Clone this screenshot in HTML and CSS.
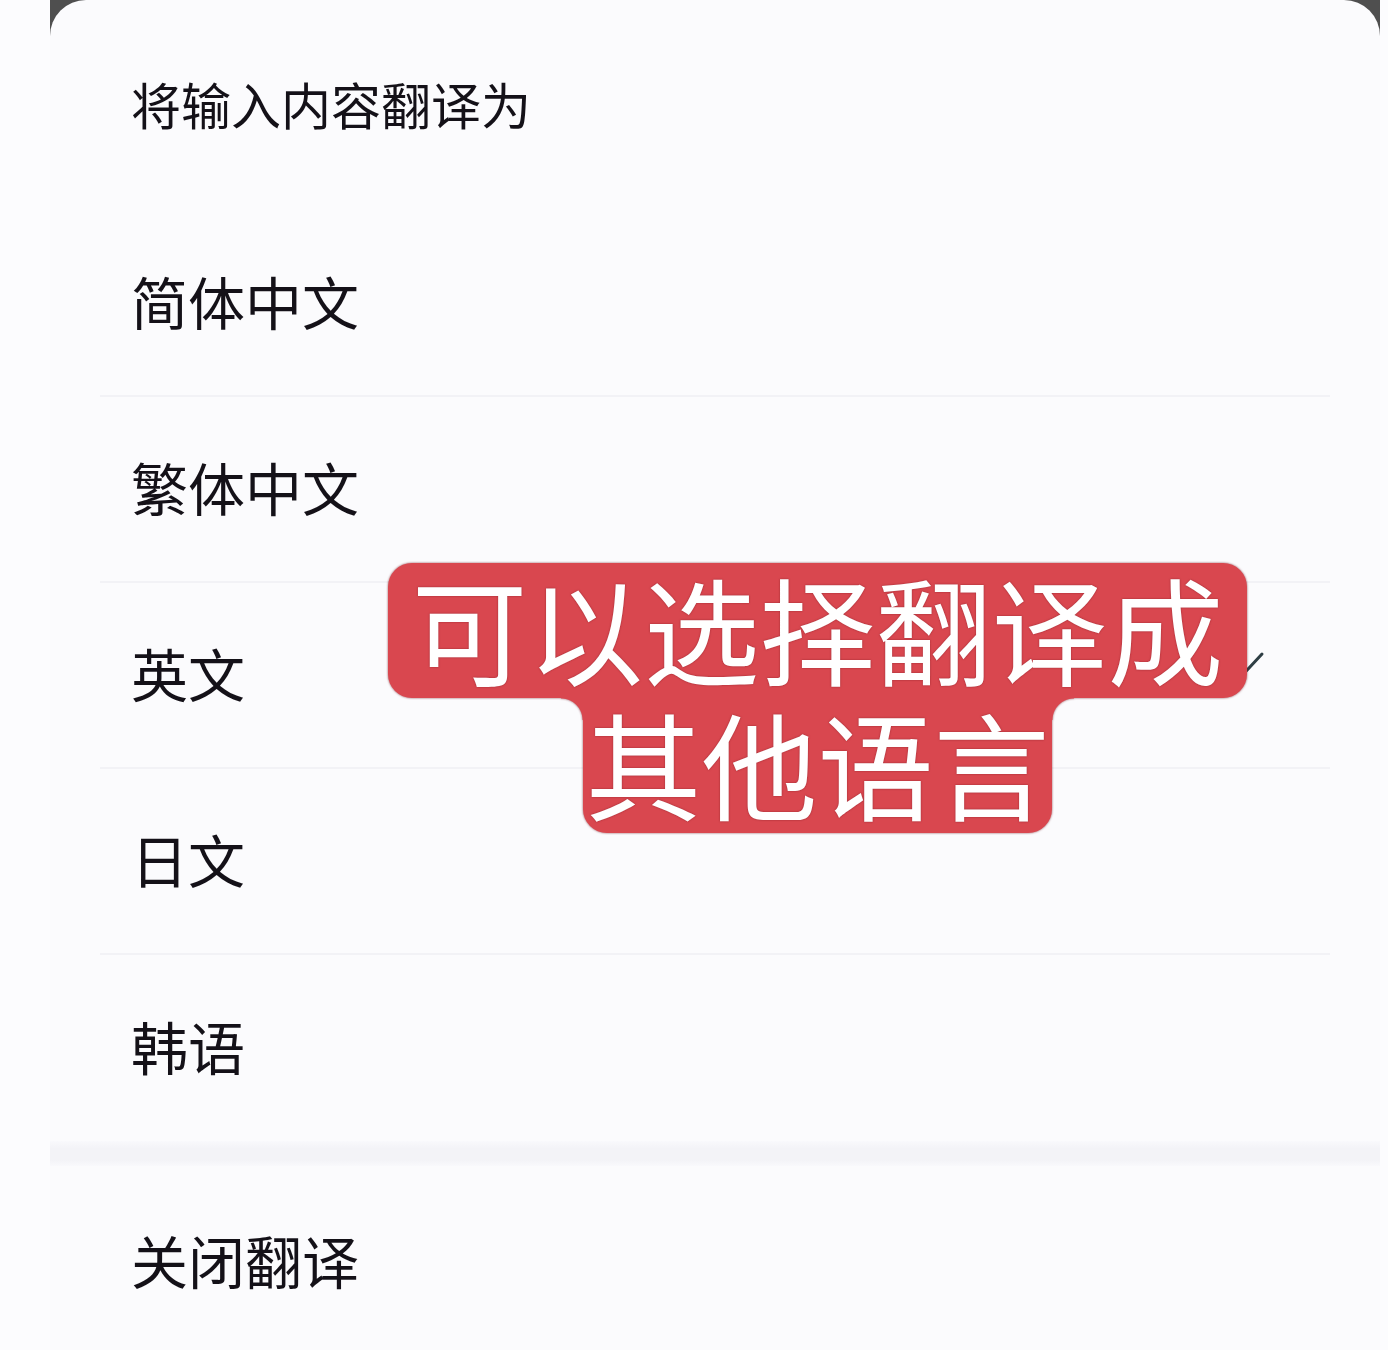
FILE: index.html
```html
<!DOCTYPE html>
<html lang="zh-CN">
<head>
  <meta charset="UTF-8">
  <meta name="viewport" content="width=device-width, initial-scale=1.0">
  <title>翻译语言选择</title>
  <link rel="stylesheet" href="styles.css">
</head>
<body>
  <div class="screen">
    <div class="sheet">
      <div class="sheet_title">将输入内容翻译为</div>
      <ul class="lang_list">
        <li class="item">简体中文</li>
        <li class="item">繁体中文</li>
        <li class="item on">
          英文
          <svg class="check" viewBox="0 0 48 38" width="48" height="38">
            <polyline points="4,20 18,34 44,6" fill="none" stroke="#2e3e44" stroke-width="3" stroke-linecap="round" stroke-linejoin="round"/>
          </svg>
        </li>
        <li class="item">日文</li>
        <li class="item last">韩语</li>
      </ul>
      <div class="band"></div>
      <div class="item close">关闭翻译</div>
    </div>

    <!-- 빨간 자막 라벨 -->
    <div class="caption">
      <span class="cap_line01">可以选择翻译成</span>
      <span class="cap_line02">其他语言</span>
    </div>
  </div>
</body>
</html>
```

FILE: styles.css
```css
body{
  margin: 0;
  background-color: #fcfcfe;
  font-family: "Noto Sans CJK SC", "Noto Sans", sans-serif;
  color: #141118;
}
.screen{
  margin-left: 50px;
  width: 1330px;
  height: 1350px;
  overflow: hidden;
  position: relative;
  background: linear-gradient(#4f4f4f, #4f4f4f) top left / 100% 40px no-repeat;
}
.sheet{
  background-color: #fbfbfd;
  border-radius: 36px 36px 0 0;
  height: 100%;
}
.sheet_title{
  box-sizing: border-box;
  height: 211px;
  margin: 0 50px;
  padding: 0 0 6px 31px;
  display: flex;
  align-items: center;
  font-size: 50px;
}
.lang_list{
  list-style: none;
  margin: 0;padding: 0;
}
.item{
  box-sizing: border-box;
  height: 186px;
  margin: 0 50px;
  padding: 0 0 6px 31px;
  display: flex;
  align-items: center;
  font-size: 57px;
  border-bottom: 2px solid #f2f2f6;
}
.item.last{border-bottom: none;}
.item.on{justify-content: space-between;}
.check{
  align-self: flex-start;
  margin-top: 65px;
  margin-right: 64px;
}
.band{
  height: 25px;
  margin-left: -10px;
  background: linear-gradient(#f9f9fc, #f3f3f7 30%, #f3f3f7 75%, #f9f9fc);
}
.item.close{
  height: 192px;
  border-bottom: none;
}

/* 자막 */
.caption{
  position: absolute;
  left: 338px; top: 563px;
  filter: drop-shadow(0 0 1px rgba(110, 20, 30, .7));
}
.caption span{
  display: block;
  box-sizing: border-box;
  height: 135px;
  padding-bottom: 8px;
  line-height: 127px;
  background-color: #d9474f;
  color: #fff;
  font-size: 116px;
  font-weight: 400;
  text-align: center;
  text-shadow: 0 0 2px rgba(90, 10, 20, .55);
}
.cap_line01{
  width: 859px;
  border-radius: 24px;
}
.cap_line02{
  width: 469px;
  margin-left: 195px;
  border-radius: 0 0 24px 24px;
  position: relative;
}
.cap_line02::before,
.cap_line02::after{
  content: "";
  position: absolute;
  top: 0;
  width: 22px;height: 22px;
}
.cap_line02::before{
  left: -22px;
  background: radial-gradient(circle at 0 100%, transparent 21px, #d9474f 22px);
}
.cap_line02::after{
  right: -22px;
  background: radial-gradient(circle at 100% 100%, transparent 21px, #d9474f 22px);
}
```
